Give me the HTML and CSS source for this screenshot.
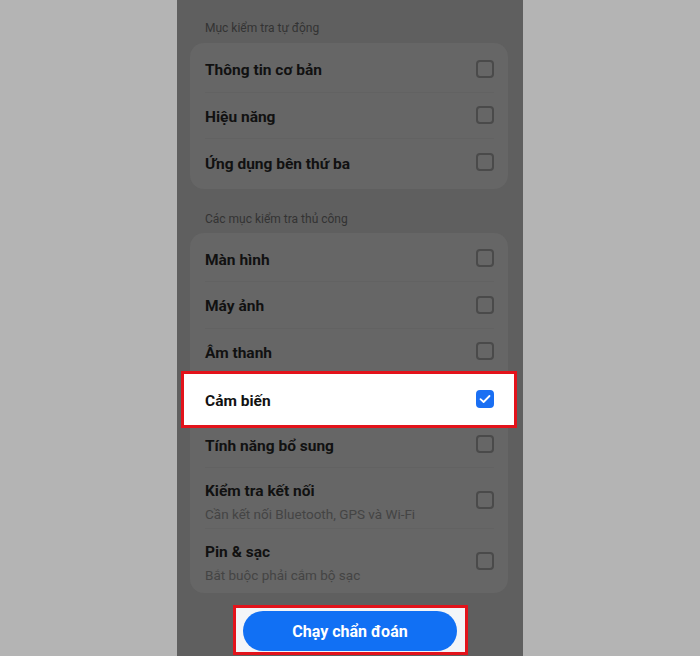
FILE: index.html
```html
<!DOCTYPE html>
<html lang="vi">
<head>
  <meta charset="UTF-8">
  <title>Chẩn đoán</title>
  <link rel="stylesheet" href="styles.css">
</head>
<body>

  <!-- Phone screen -->
  <div class="phone">

    <!-- Auto checks -->
    <p class="group-label first">Mục kiểm tra tự động</p>
    <div class="card">
      <div class="row">
        <span class="title">Thông tin cơ bản</span>
        <span class="box"></span>
      </div>
      <div class="row">
        <span class="title">Hiệu năng</span>
        <span class="box"></span>
      </div>
      <div class="row last">
        <span class="title">Ứng dụng bên thứ ba</span>
        <span class="box"></span>
      </div>
    </div>

    <!-- Manual checks -->
    <p class="group-label">Các mục kiểm tra thủ công</p>
    <div class="card">
      <div class="row">
        <span class="title">Màn hình</span>
        <span class="box"></span>
      </div>
      <div class="row">
        <span class="title">Máy ảnh</span>
        <span class="box"></span>
      </div>
      <div class="row">
        <span class="title">Âm thanh</span>
        <span class="box"></span>
      </div>
      <div class="row picked">
        <span class="title">Cảm biến</span>
        <span class="box checked">
          <svg width="12" height="10" viewBox="0 0 12 10"><path d="M1.5 5.2 L4.6 8 L10.5 2" fill="none" stroke="#fff" stroke-width="1.8" stroke-linecap="round" stroke-linejoin="round"/></svg>
        </span>
      </div>
      <div class="row">
        <span class="title">Tính năng bổ sung</span>
        <span class="box"></span>
      </div>
      <div class="row tall">
        <div class="texts">
          <span class="title">Kiểm tra kết nối</span>
          <span class="sub">Cần kết nối Bluetooth, GPS và Wi-Fi</span>
        </div>
        <span class="box"></span>
      </div>
      <div class="row tall last">
        <div class="texts">
          <span class="title">Pin &amp; sạc</span>
          <span class="sub">Bắt buộc phải cắm bộ sạc</span>
        </div>
        <span class="box"></span>
      </div>
    </div>

    <!-- Run button -->
    <div class="bottom">
      <div class="btn-frame">
        <button class="run">Chạy chẩn đoán</button>
      </div>
    </div>

  </div>

</body>
</html>
```

FILE: styles.css
```css
body {
  margin: 0;
  background-color: #b4b4b4;
  font-family: Roboto, "Noto Sans", Arial, sans-serif;
}
.phone {
  width: 346px;
  height: 656px;
  margin-left: 177px;
  background-color: #5f5f5f;
  display: flex;
  flex-direction: column;
  overflow: hidden;
}
.group-label {
  margin: 22px 0 6px 28px;
  font-size: 12px;
  line-height: 16px;
  color: #333333;
}
.group-label.first {
  margin-top: 20px;
  margin-bottom: 7px;
}
.card {
  margin: 0 15px 0 13px;
  padding: 3px 0;
  background-color: #666666;
  border-radius: 14px;
}
.row {
  height: 46.5px;
  margin: 0 14px 0 15px;
  display: flex;
  align-items: center;
  justify-content: space-between;
  border-bottom: 1px solid #626262;
  box-sizing: border-box;
}
.row.last {
  border-bottom: none;
}
.row > .title {
  padding-top: 3px;
}
.row.tall {
  height: 61px;
  padding-top: 3px;
}
.title {
  font-size: 15.5px;
  font-weight: bold;
  color: #111111;
  line-height: 20px;
}
.texts {
  display: flex;
  flex-direction: column;
  padding-top: 4px;
}
.sub {
  margin-top: 4px;
  font-size: 13.5px;
  line-height: 18px;
  color: #444444;
}
.box {
  width: 18px;
  height: 18px;
  border: 2px solid #4a4a4a;
  border-radius: 4px;
  box-sizing: border-box;
  flex-shrink: 0;
  display: flex;
  align-items: center;
  justify-content: center;
}
.box.checked {
  background-color: #1a6ff3;
  border-color: #1a6ff3;
}

/* highlighted row, not dimmed */
.row.picked {
  height: 57px;
  margin: -4.5px -9px -6px -9px;
  padding: 0 20px 0 21px;
  background-color: #ffffff;
  border: 3px solid #e3131b;
}

.bottom {
  margin-top: 12px;
  display: flex;
  justify-content: center;
}
.btn-frame {
  margin-left: 1px;
  width: 235px;
  height: 50px;
  border: 3px solid #e3131b;
  box-sizing: border-box;
  background-color: #f3f5f8;
  padding: 3px 8px 0 7px;
}
.run {
  width: 100%;
  height: 40px;
  border: none;
  border-radius: 20px;
  background-color: #1170f4;
  color: #ffffff;
  font-family: Roboto, "Noto Sans", Arial, sans-serif;
  font-size: 16px;
  font-weight: bold;
}
```
